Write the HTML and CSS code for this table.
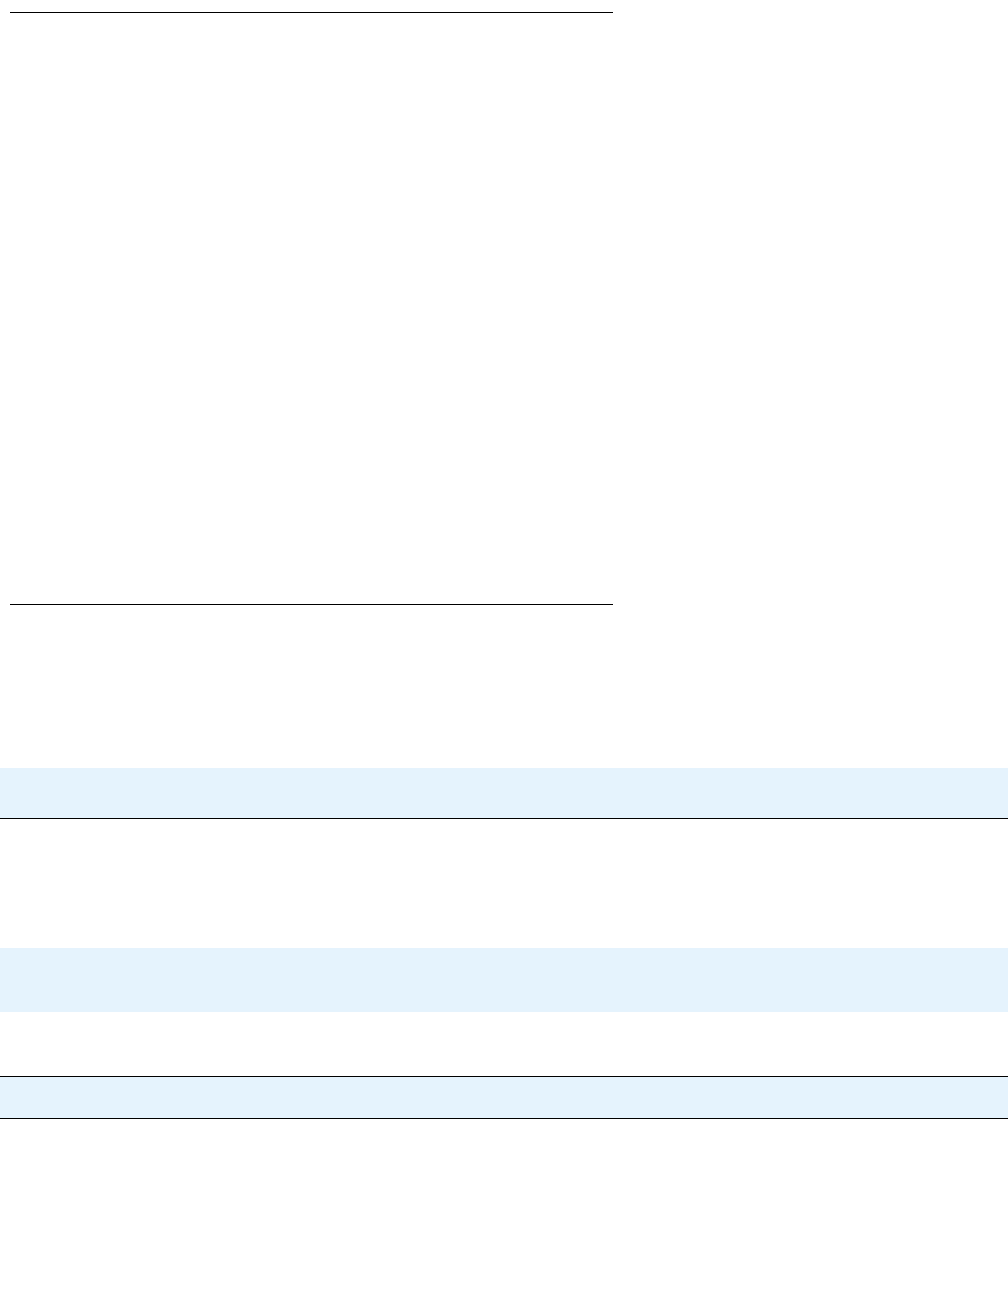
FILE: index.html
```html
<!DOCTYPE html>
<html lang="en">
<head>
  <meta charset="UTF-8">
  <title>Page</title>
  <link rel="stylesheet" href="styles.css">
</head>
<body>
  <div class="frame"></div>

  <div class="rows">
    <div class="row band ruled"></div>
    <div class="row tall"></div>
    <div class="row band mid"></div>
    <div class="row mid ruled"></div>
    <div class="row band thin ruled"></div>
  </div>
</body>
</html>
```

FILE: styles.css
```css
body {
  font-family: "Liberation Sans", Arial, sans-serif;
  margin: 0;
  background: #fff;
}
.frame {
  box-sizing: border-box;
  width: 603px;
  height: 593px;
  margin: 12px 0 0 10px;
  border-top: 1px solid #000;
  border-bottom: 1px solid #000;
}
.rows {
  margin-top: 163px;
  display: flex;
  flex-direction: column;
}
.row {
  box-sizing: border-box;
  height: 51px;
}
.band {
  background-color: #e5f3fd;
}
.ruled {
  border-bottom: 1px solid #000;
}
.tall {
  height: 129px;
}
.mid {
  height: 64px;
}
.mid.ruled {
  height: 65px;
}
.thin {
  height: 42px;
}
```
